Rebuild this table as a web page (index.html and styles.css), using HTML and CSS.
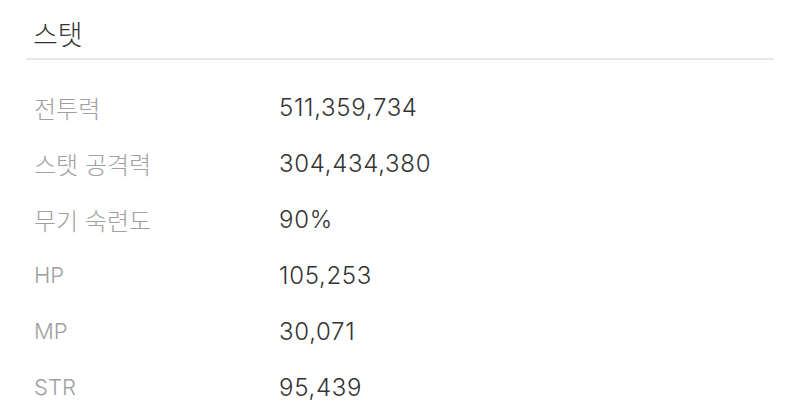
FILE: index.html
```html
<!DOCTYPE html>
<html lang="ko">
<head>
<meta charset="utf-8">
<link rel="stylesheet" href="styles.css">
</head>
<body>
<section class="panel">
  <h2 class="title">스탯</h2>
  <dl class="stats">
    <div class="row"><dt>전투력</dt><dd>511,359,734</dd></div>
    <div class="row"><dt>스탯 공격력</dt><dd>304,434,380</dd></div>
    <div class="row"><dt>무기 숙련도</dt><dd>90%</dd></div>
    <div class="row"><dt class="latin">HP</dt><dd>105,253</dd></div>
    <div class="row"><dt class="latin">MP</dt><dd>30,071</dd></div>
    <div class="row"><dt class="latin">STR</dt><dd>95,439</dd></div>
  </dl>
</section>
</body>
</html>
```
FILE: styles.css
```css
html, body {
  margin: 0;
  padding: 0;
  background: #ffffff;
}
body {
  font-family: Inter, "Noto Sans CJK KR", sans-serif;
  -webkit-font-smoothing: antialiased;
}
.panel {
  padding: 0 26px;
}
.title {
  margin: 0;
  height: 60px;
  box-sizing: border-box;
  padding: 18px 0 0 7px;
  font-family: "Noto Sans CJK KR", sans-serif;
  font-size: 27px;
  line-height: 32px;
  font-weight: 300;
  color: #333333;
  border-bottom: 2px solid #e8e8e8;
}
.stats {
  margin: 19px 0 0;
  padding: 0;
}
.row {
  display: grid;
  grid-template-columns: 245px 1fr;
  height: 56px;
  align-items: center;
  padding-left: 8px;
}
.row dt {
  margin: 0;
  font-family: "Noto Sans CJK KR", sans-serif;
  font-size: 24px;
  font-weight: 300;
  color: #a0a0a0;
}
.row dt.latin {
  font-family: Inter, sans-serif;
  font-size: 22px;
}
.row dd {
  margin: 0;
  font-size: 24px;
  font-weight: 300;
  letter-spacing: 0.7px;
  color: #333333;
}
```
